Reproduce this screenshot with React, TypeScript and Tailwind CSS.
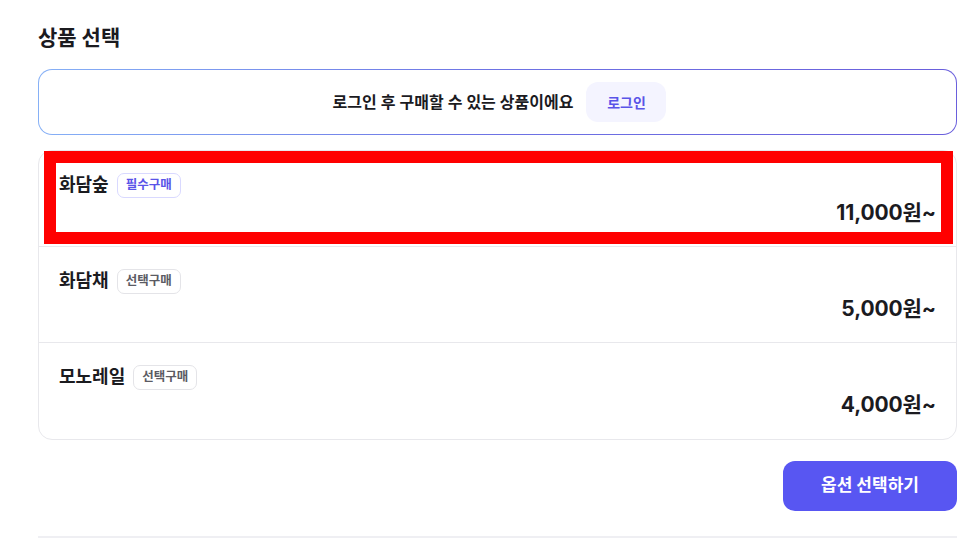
import React from "react";

const font = { fontFamily: "Inter, 'Noto Sans CJK KR', 'Noto Sans', sans-serif" };

function Row({
  name,
  badge,
  required,
  price,
  last,
  highlight,
}: {
  name: string;
  badge: string;
  required?: boolean;
  price: string;
  last?: boolean;
  highlight?: boolean;
}) {
  return (
    <div className={`relative pl-[20px] pr-[20px] pt-[21px] pb-[20px] h-[96px] ${last ? "" : "border-b border-[#e8e8ec]"}`}>
      <div className="flex items-center gap-[8px] h-[26px]">
        <span className="text-[18px] font-bold text-[#1b1b1f] leading-[26px]">{name}</span>
        <span
          className={`h-[25px] px-[8px] rounded-[7px] border text-[12.5px] font-semibold flex items-center leading-none ${
            required ? "border-[#d9d9ff] text-[#5a54e8]" : "border-[#e4e4e8] text-[#5b5b63]"
          }`}
        >
          {badge}
        </span>
      </div>
      <div className="flex justify-end mt-[1px]">
        <span className="text-[21px] font-bold text-[#1b1b1f] leading-[28px] tracking-[-0.1px]">{price}</span>
      </div>
      {highlight && (
        <div className="absolute left-[5px] right-[3px] top-[0px] bottom-[2px] border-[12px] border-[#ff0000] pointer-events-none" />
      )}
    </div>
  );
}

export default function App() {
  return (
    <div className="w-[970px] h-[550px] bg-white overflow-hidden" style={font}>
      <div className="pl-[38px] w-[957px]">
        <h2 className="pt-[24px] text-[21px] font-bold leading-[28px] text-[#1b1b1f]">상품 선택</h2>
        <div className="mt-[17px] rounded-[14px] p-px bg-gradient-to-r from-[#86b0f6] via-[#6d72e4] to-[#6a5fdc]">
          <div className="h-[64px] rounded-[13px] bg-white flex items-center justify-center gap-[13px] pl-[4px]">
            <span className="text-[16px] font-semibold text-[#1b1b1f]">로그인 후 구매할 수 있는 상품이에요</span>
            <button className="h-[40px] w-[80px] rounded-[12px] bg-[#f4f4ff] text-[14px] font-semibold text-[#5a54e8]">
              로그인
            </button>
          </div>
        </div>
        <div className="mt-[15px] rounded-[14px] border border-[#e8e8ec] overflow-visible">
          <Row name="화담숲" badge="필수구매" required price="11,000원~" highlight />
          <Row name="화담채" badge="선택구매" price="5,000원~" />
          <Row name="모노레일" badge="선택구매" price="4,000원~" last />
        </div>
        <div className="flex justify-end mt-[21px]">
          <button className="h-[50px] w-[174px] rounded-[12px] bg-[#5856f2] text-white text-[17px] font-bold">
            옵션 선택하기
          </button>
        </div>
        <div className="mt-[25px] h-[2px] bg-[#efeff3]" />
      </div>
    </div>
  );
}
